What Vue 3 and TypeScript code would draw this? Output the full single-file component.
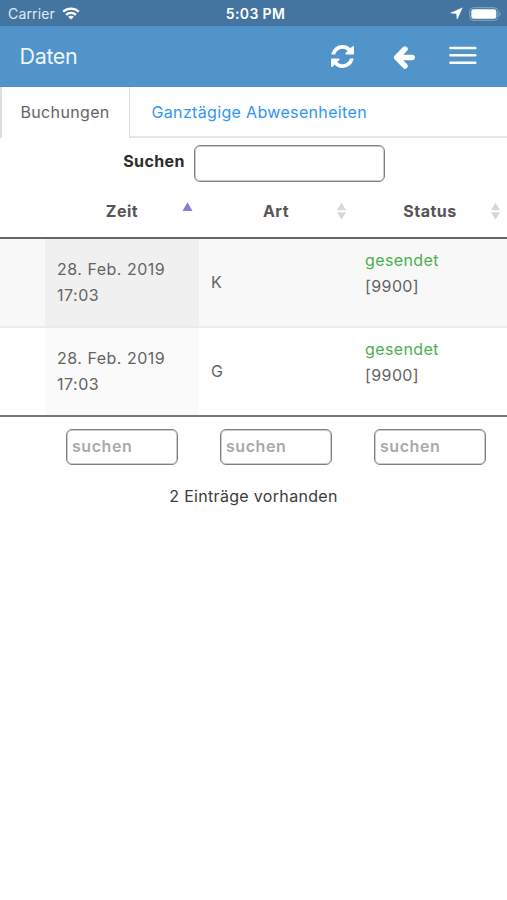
<script setup lang="ts">
interface Booking {
  date: string
  time: string
  kind: string
  status: string
  code: string
}

interface Column {
  label: string
  sorted: boolean
}

const columns: Column[] = [
  { label: 'Zeit', sorted: true },
  { label: 'Art', sorted: false },
  { label: 'Status', sorted: false },
]

const bookings: Booking[] = [
  { date: '28. Feb. 2019', time: '17:03', kind: 'K', status: 'gesendet', code: '[9900]' },
  { date: '28. Feb. 2019', time: '17:03', kind: 'G', status: 'gesendet', code: '[9900]' },
]
</script>

<template>
  <div class="screen">
    <div class="statusbar">
      <div class="carrier">
        <span>Carrier</span>
        <svg class="wifi" width="18" height="13" viewBox="0 0 18 13">
          <g fill="none" stroke="#fff" stroke-width="2.3">
            <path d="M1.2 4.7C5.6.6 12.4.6 16.8 4.7" />
            <path d="M4.1 7.8c2.8-2.6 7-2.6 9.8 0" />
          </g>
          <path fill="#fff" d="M9 12.6 6.1 9.8c1.6-1.5 4.2-1.5 5.8 0z" />
        </svg>
      </div>
      <span class="clock">5:03 PM</span>
      <div class="power">
        <svg class="location" width="13" height="13" viewBox="0 0 13 13"><path fill="#fff" stroke="#fff" stroke-width=".6" stroke-linejoin="round" d="M12.2.9 7.2 12 6.6 6.5.9 6z" /></svg>
        <svg class="battery" width="33" height="14" viewBox="0 0 33 14">
          <rect x=".7" y=".7" width="28.2" height="12.6" rx="3.6" fill="none" stroke="#86a8c5" />
          <rect x="2.3" y="2.3" width="25" height="9.4" rx="2.3" fill="#fff" />
          <path d="M30.3 4.6c1.6.7 1.6 4.1 0 4.8z" fill="#86a8c5" />
        </svg>
      </div>
    </div>

    <header class="navbar">
      <h1>Daten</h1>
      <div class="actions">
        <svg class="refresh" width="23" height="23" viewBox="0 0 1536 1536">
          <path fill="#fff" d="M1511 928q0 5-1 7-64 268-268 434.500t-478 166.500q-146 0-282.500-55t-243.500-157l-129 129q-19 19-45 19t-45-19-19-45v-448q0-26 19-45t45-19h448q26 0 45 19t19 45-19 45l-137 137q71 66 161 102t187 36q134 0 250-65t186-179q11-17 53-117 8-23 30-23h192q13 0 22.500 9.500t9.500 22.500zm25-800v448q0 26-19 45t-45 19h-448q-26 0-45-19t-19-45 19-45l138-138q-148-137-349-137-134 0-250 65t-186 179q-11 17-53 117-8 23-30 23h-199q-13 0-22.500-9.500t-9.500-22.500v-7q65-268 270-434.500t480-166.500q146 0 284 55.500t245 156.500l130-129q19-19 45-19t45 19 19 45z" />
        </svg>
        <svg class="back" width="22" height="23" viewBox="0 0 22 23">
          <path fill="none" stroke="#fff" stroke-width="5.4" stroke-linecap="round" stroke-linejoin="round" d="M12 3 3.700 11.500 12 20M5 11.500h14.200" />
        </svg>
        <svg class="burger" width="28" height="19" viewBox="0 0 28 19">
          <path stroke="#fff" stroke-width="2.5" stroke-linecap="round" d="M1.400 2H26.300M1.400 9.300H26.300M1.400 16.700H26.300" />
        </svg>
      </div>
    </header>

    <nav class="tabs">
      <a class="tab active">Buchungen</a>
      <a class="tab absences">Ganztägige Abwesenheiten</a>
    </nav>

    <label class="search">
      <span>Suchen</span>
      <input type="text" />
    </label>

    <div class="table">
      <div class="row head">
        <span></span>
        <div v-for="col in columns" :key="col.label" class="th">
          <span>{{ col.label }}</span>
          <svg class="sort" width="11" height="18" viewBox="0 0 11 18">
            <path v-if="col.sorted" fill="#8080d6" d="M5.500.300 10.500 9H.5z" />
            <path v-else fill="#d8d8d8" d="M5.500.600 10 8.200H1zM1 10.200h9L5.500 17.800z" />
          </svg>
        </div>
      </div>
      <div v-for="b in bookings" :key="b.kind" class="row body">
        <span></span>
        <div class="td time"><div>{{ b.date }}<br />{{ b.time }}</div></div>
        <div class="td kind">{{ b.kind }}</div>
        <div class="td state"><div><span class="sent">{{ b.status }}</span><br />{{ b.code }}</div></div>
      </div>
      <div class="row foot">
        <span></span>
        <div v-for="col in columns" :key="col.label" class="filter">
          <input type="text" placeholder="suchen" />
        </div>
      </div>
    </div>

    <p class="summary">2 Einträge vorhanden</p>
  </div>
</template>

<style>
body {
  background: #fff;
}
</style>

<style scoped>
.screen {
  width: 507px;
  height: 900px;
  overflow: hidden;
  background: #fff;
  color: #646464;
  font: 16px/26px Inter, 'Liberation Sans', sans-serif;
}
.statusbar {
  display: grid;
  grid-template-columns: 1fr auto 1fr;
  align-items: center;
  box-sizing: border-box;
  height: 26px;
  padding: 1px 5px 0 8px;
  background: #4475a0;
  color: #fff;
  font-size: 14px;
}
.carrier {
  display: flex;
  align-items: center;
  gap: 7px;
  color: #e0eaf2;
  letter-spacing: 0.15px;
}
.wifi {
  margin-bottom: 1px;
}
.clock {
  padding-left: 1px;
  font-weight: 600;
  letter-spacing: 0.35px;
}
.power {
  display: flex;
  align-items: center;
  justify-content: flex-end;
  gap: 6px;
}
.location,
.battery {
  margin-bottom: 1px;
}
.navbar {
  display: flex;
  align-items: center;
  justify-content: space-between;
  box-sizing: border-box;
  height: 61px;
  padding: 0 30px 0 19.5px;
  border-bottom: 1px solid #5a8db8;
  background: #5194ca;
}
h1 {
  margin: 0;
  color: #edf4fa;
  font-size: 21.5px;
  font-weight: 400;
  letter-spacing: -0.35px;
}
.actions {
  display: flex;
  align-items: center;
}
.refresh {
  margin-right: 39px;
}
.back {
  margin: 2px 34px 0 0;
}
.burger {
  margin-bottom: 2px;
}
.tabs {
  display: flex;
  box-sizing: border-box;
  height: 51px;
  box-shadow: inset 0 -2px #e6e6e6;
  letter-spacing: 0.34px;
}
.tab {
  box-sizing: border-box;
  height: 51px;
  line-height: 51px;
  padding-left: 21.5px;
  color: #2f96f3;
}
.tab.active {
  width: 130px;
  padding-left: 18.5px;
  border: solid #dfdfdf;
  border-width: 0 1px 0 2px;
  background: #fff;
  color: #646464;
}
.search {
  display: flex;
  justify-content: center;
  gap: 9px;
  padding: 7px 0 0 1px;
  color: #2c2c2c;
  font-weight: 700;
  line-height: 33px;
  letter-spacing: 0.4px;
}
input {
  box-sizing: border-box;
  height: 37px;
  margin: 0;
  padding: 0 4px;
  border: 1px solid #808080;
  border-radius: 6px;
  background: #fff;
  box-shadow: inset 0 0 0 1px rgba(110, 110, 110, 0.35);
  font: 600 16px Inter, 'Liberation Sans', sans-serif;
  letter-spacing: 0.55px;
}
.search input {
  width: 191px;
}
input::placeholder {
  color: #aaa;
  opacity: 1;
}
.row {
  display: grid;
  grid-template-columns: 45px repeat(3, 154px);
}
.head {
  box-sizing: border-box;
  height: 57px;
  border-bottom: 2px solid #666;
}
.th {
  display: flex;
  align-items: center;
  justify-content: flex-end;
  padding: 3px 6px 0 0;
  color: #555;
  font-weight: 700;
  letter-spacing: 0.5px;
}
.th > span {
  flex: 1;
  padding-left: 17px;
  text-align: center;
}
.sort {
  margin-bottom: 1px;
}
.body {
  box-sizing: border-box;
  height: 87px;
  background: #f8f8f8;
}
.body + .body {
  height: 89px;
  border-top: 2px solid #ebebeb;
  background: #fff;
}
.td {
  display: flex;
  align-items: center;
  padding: 0 0 2px 12px;
}
.time {
  background: #f0f0f0;
  letter-spacing: 0.5px;
}
.body + .body .time {
  background: #fafafa;
}
.state {
  padding-bottom: 19px;
  letter-spacing: 0.4px;
}
.sent {
  color: #4caf50;
}
.foot {
  border-top: 2px solid #777;
  padding-top: 12px;
}
.filter {
  padding-left: 21px;
}
.filter input {
  width: 112px;
  height: 36px;
  padding: 0 4px 2px 5px;
}
.summary {
  margin: 18px 0 0;
  color: #3c3c3c;
  letter-spacing: 0.32px;
  text-align: center;
}
</style>
